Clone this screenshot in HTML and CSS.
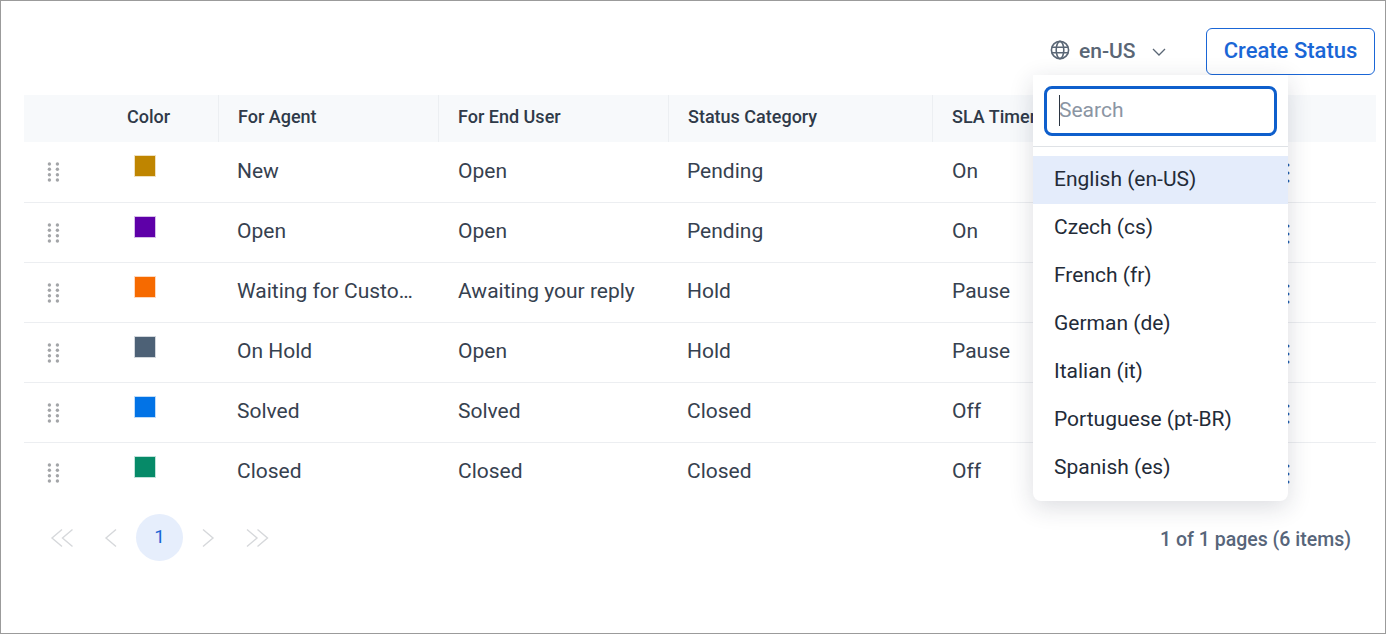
FILE: index.html
```html
<!DOCTYPE html>
<html lang="en">
<head>
<meta charset="utf-8">
<title>Statuses</title>
<link rel="stylesheet" href="styles.css">
</head>
<body>
<svg class="defs" width="0" height="0" aria-hidden="true">
  <symbol id="grip" viewBox="0 0 14 22">
    <g fill="#a3a5a8"><circle cx="2.400" cy="3" r="1.700"/><circle cx="10.400" cy="3" r="1.700"/><circle cx="2.400" cy="8.300" r="1.700"/><circle cx="10.400" cy="8.300" r="1.700"/><circle cx="2.400" cy="13.700" r="1.700"/><circle cx="10.400" cy="13.700" r="1.700"/><circle cx="2.400" cy="19" r="1.700"/><circle cx="10.400" cy="19" r="1.700"/></g>
  </symbol>
  <symbol id="kebab" viewBox="0 0 6 24">
    <g fill="#1f5fae"><circle cx="3" cy="4" r="1.500"/><circle cx="3" cy="12" r="1.500"/><circle cx="3" cy="20" r="1.500"/></g>
  </symbol>
</svg>
<main class="page">
  <header class="toolbar">
    <div class="lang">
      <button class="lang-btn" type="button">
        <svg class="globe" viewBox="0 0 20 20" fill="none" stroke="#5a6675" stroke-width="1.600"><circle cx="10" cy="10" r="8.600"/><ellipse cx="10" cy="10" rx="3.800" ry="8.600"/><path d="M1.600 7.200h16.800M1.600 12.800h16.800"/></svg>
        <span class="lang-code">en-US</span>
        <svg class="chev" viewBox="0 0 14 8" fill="none" stroke="#5a6675" stroke-width="1.300"><path d="M1 1l6 6 6-6"/></svg>
      </button>
      <div class="menu">
        <div class="search-wrap"><div class="search"><span class="caret"></span><span class="placeholder">Search</span></div></div>
        <ul class="options">
          <li class="option selected">English (en-US)</li>
          <li class="option">Czech (cs)</li>
          <li class="option">French (fr)</li>
          <li class="option">German (de)</li>
          <li class="option">Italian (it)</li>
          <li class="option">Portuguese (pt-BR)</li>
          <li class="option">Spanish (es)</li>
        </ul>
      </div>
    </div>
    <button class="create" type="button">Create Status</button>
  </header>

  <section class="table">
    <div class="row head">
      <div class="cell"></div>
      <div class="cell color-head">Color</div>
      <div class="cell sep">For Agent</div>
      <div class="cell sep">For End User</div>
      <div class="cell sep">Status Category</div>
      <div class="cell sep">SLA Timer</div>
      <div class="cell"></div>
    </div>
    <div class="row body">
      <div class="cell"><svg class="grip"><use href="#grip"/></svg></div>
      <div class="cell"><span class="swatch amber"></span></div>
      <div class="cell text">New</div><div class="cell text">Open</div><div class="cell text">Pending</div><div class="cell text">On</div>
      <div class="cell kebab-cell"><svg class="kebab"><use href="#kebab"/></svg></div>
    </div>
    <div class="row body">
      <div class="cell"><svg class="grip"><use href="#grip"/></svg></div>
      <div class="cell"><span class="swatch purple"></span></div>
      <div class="cell text">Open</div><div class="cell text">Open</div><div class="cell text">Pending</div><div class="cell text">On</div>
      <div class="cell kebab-cell"><svg class="kebab"><use href="#kebab"/></svg></div>
    </div>
    <div class="row body">
      <div class="cell"><svg class="grip"><use href="#grip"/></svg></div>
      <div class="cell"><span class="swatch orange"></span></div>
      <div class="cell text"><span class="clip">Waiting for Customer</span></div><div class="cell text">Awaiting your reply</div><div class="cell text">Hold</div><div class="cell text">Pause</div>
      <div class="cell kebab-cell"><svg class="kebab"><use href="#kebab"/></svg></div>
    </div>
    <div class="row body">
      <div class="cell"><svg class="grip"><use href="#grip"/></svg></div>
      <div class="cell"><span class="swatch slate"></span></div>
      <div class="cell text">On Hold</div><div class="cell text">Open</div><div class="cell text">Hold</div><div class="cell text">Pause</div>
      <div class="cell kebab-cell"><svg class="kebab"><use href="#kebab"/></svg></div>
    </div>
    <div class="row body">
      <div class="cell"><svg class="grip"><use href="#grip"/></svg></div>
      <div class="cell"><span class="swatch blue"></span></div>
      <div class="cell text">Solved</div><div class="cell text">Solved</div><div class="cell text">Closed</div><div class="cell text">Off</div>
      <div class="cell kebab-cell"><svg class="kebab"><use href="#kebab"/></svg></div>
    </div>
    <div class="row body last">
      <div class="cell"><svg class="grip"><use href="#grip"/></svg></div>
      <div class="cell"><span class="swatch green"></span></div>
      <div class="cell text">Closed</div><div class="cell text">Closed</div><div class="cell text">Closed</div><div class="cell text">Off</div>
      <div class="cell kebab-cell"><svg class="kebab"><use href="#kebab"/></svg></div>
    </div>
  </section>

  <footer class="pager">
    <nav class="pages">
      <svg class="pg dbl" viewBox="0 0 24 20" fill="none" stroke="#d6d8db" stroke-width="1.400"><path d="M12 1.500L2 10l10 8.500M22.500 1.500L12.500 10l10 8.500"/></svg>
      <svg class="pg sgl first" viewBox="0 0 14 20" fill="none" stroke="#d6d8db" stroke-width="1.400"><path d="M12 1.500L2 10l10 8.500"/></svg>
      <span class="current">1</span>
      <svg class="pg sgl next" viewBox="0 0 14 20" fill="none" stroke="#d6d8db" stroke-width="1.400"><path d="M2 1.500L12 10 2 18.500"/></svg>
      <svg class="pg dbl last" viewBox="0 0 24 20" fill="none" stroke="#d6d8db" stroke-width="1.400"><path d="M2 1.500L12 10 2 18.500M12.500 1.500L22.500 10l-10 8.500"/></svg>
    </nav>
    <span class="count">1 of 1 pages (6 items)</span>
  </footer>
</main>
</body>
</html>
```
FILE: styles.css
```css
* { box-sizing: border-box; }
html, body { margin: 0; height: 100%; }
body { font-family: Roboto, "Liberation Sans", sans-serif; color: #2b3542; background: #fff; overflow: hidden; }
.defs { position: absolute; }
.page { width: 1386px; height: 634px; border: 1px solid #9b9b9b; padding: 27px 10px 0 23px; }

.toolbar { display: flex; justify-content: flex-end; align-items: stretch; height: 47px; gap: 22px; }
.lang { position: relative; width: 134px; }
.lang-btn { display: flex; align-items: center; width: 100%; height: 100%; padding: 0; border: 0; background: none; font: 500 21px Roboto, sans-serif; color: #5a6675; }
.globe { width: 20px; height: 20px; margin-top: -3px; }
.lang-code { margin-left: 9px; margin-top: -2px; }
.chev { width: 14px; height: 8px; margin-left: 16px; }
.create { width: 169px; border: 1px solid #1a66d6; border-radius: 6px; background: #fff; color: #1a66d6; font: 500 22px Roboto, sans-serif; padding: 0 0 2px; }

.menu { position: absolute; z-index: 5; left: -17px; top: 47px; width: 255px; height: 426px; background: #fff; border-radius: 0 0 8px 8px; box-shadow: 0 6px 24px rgba(30, 40, 60, .16); }
.search-wrap { padding: 11px; border-bottom: 1px solid #dfe2e6; height: 72px; }
.search { display: flex; align-items: center; height: 50px; border: 3px solid #0f5fcc; border-radius: 8px; padding: 0 0 2px 12px; position: relative; }
.caret { position: absolute; left: 12px; top: 6px; width: 1px; height: 31px; background: #2b3542; }
.placeholder { font-size: 21px; color: #8b95a3; }
.options { list-style: none; margin: 9px 0 0; padding: 0; }
.option { height: 48px; line-height: 46px; padding-left: 21px; font-size: 21px; color: #232b38; }
.option.selected { background: #e4ecfb; }

.table { margin-top: 20px; width: 1352px; }
.row { display: grid; grid-template-columns: 70px 124px 220px 230px 264px 1fr 91px; }
.head { height: 47px; background: #f7f9fb; font-size: 18px; font-weight: 500; color: #2f3a49; }
.head .cell { display: flex; align-items: center; height: 100%; padding-bottom: 5px; }
.head .color-head { padding-left: 33px; }
.head .sep { padding-left: 19px; border-left: 1px solid #eceff2; }
.body { height: 60px; border-bottom: 1px solid #eceef1; align-items: start; }
.head + .body { height: 61px; }
.body.last { border-bottom: 0; }
.text { font-size: 21px; line-height: 24px; padding: 16px 18px 0 19px; color: #36414f; white-space: nowrap; }
.text:nth-child(4), .text:nth-child(6) { padding-left: 20px; }
.head + .body .text { padding-top: 17px; }
.clip { display: block; width: 178px; overflow: hidden; text-overflow: ellipsis; }
.grip { display: block; width: 14px; height: 22px; margin: 19px 0 0 23px; }
.swatch { display: block; width: 22px; height: 22px; margin: 13px 0 0 40px; border: 1px solid rgba(255, 255, 255, .75); }
.amber { background: #bf8500; }
.purple { background: #5e00a8; }
.orange { background: #f66a00; }
.slate { background: #4d6176; }
.blue { background: #0273e6; }
.green { background: #068a68; }
.kebab-cell { padding-top: 19px; }
.kebab { display: block; width: 6px; height: 24px; }

.pager { display: flex; justify-content: space-between; align-items: center; height: 47px; margin-top: 11px; width: 1352px; padding: 0 25px 0 26px; }
.pages { display: flex; align-items: center; }
.pg.dbl { width: 24px; height: 20px; }
.pg.sgl { width: 14px; height: 20px; }
.first { margin-left: 30px; }
.current { width: 47px; height: 47px; margin-left: 18px; border-radius: 50%; background: #e6eefc; color: #1a66d6; font-size: 19px; display: flex; align-items: center; justify-content: center; padding-bottom: 2px; }
.next { margin-left: 18px; }
.pg.last { margin-left: 30px; }
.count { font-size: 19.500px; font-weight: 500; color: #57657a; padding-top: 4px; }
```
